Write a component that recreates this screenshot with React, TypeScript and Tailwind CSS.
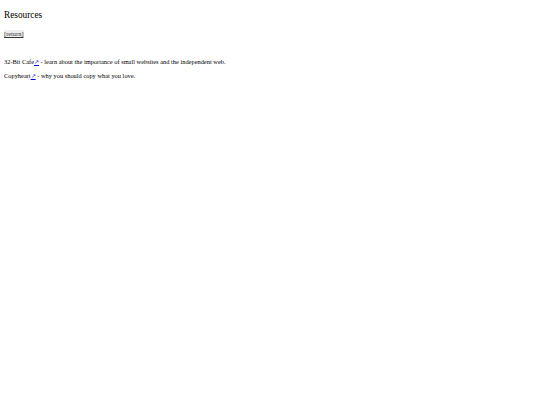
export default function App() {
  return (
    <div className="min-h-[405px] bg-white px-[4px] text-black" style={{ fontFamily: '"Liberation Serif", "Times New Roman", serif' }}>
      <h1 className="pt-[9px] text-[9.3px] leading-[12px] font-normal">Resources</h1>
      <p className="mt-[9px] text-[6.4px] leading-[8px]">
        <a href="#" className="bg-[#eeeeee] text-[#333333] underline">[return]</a>
      </p>
      <div className="mt-[20px] flex flex-col gap-[6px] text-[6.4px] leading-[8px]">
        <p>
          32-Bit Cafe<a href="#" className="text-[#0000ee] underline">↗</a> - learn about the importance of small websites and the independent web.
        </p>
        <p>
          Copyheart<a href="#" className="text-[#0000ee] underline">↗</a> - why you should copy what you love.
        </p>
      </div>
    </div>
  )
}
